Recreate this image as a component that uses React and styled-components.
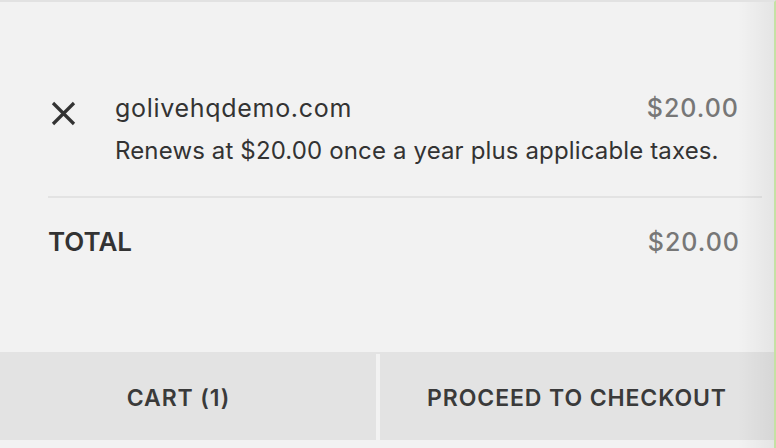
import styled, { createGlobalStyle } from 'styled-components';

const GlobalStyle = createGlobalStyle`
  html, body {
    margin: 0;
    padding: 0;
    background: #f2f2f2;
  }
  body {
    font-family: Inter, "Noto Sans", sans-serif;
    color: #333;
    -webkit-font-smoothing: antialiased;
  }
`

const Panel = styled.div`
  position: relative;
  box-sizing: border-box;
  width: 776px;
  height: 448px;
  display: flex;
  flex-direction: column;
  background: #f2f2f2;
  border-top: 2px solid #e2e2e2;
  border-right: 2px solid #c5e1a5;
  &::after {
    content: '';
    position: absolute;
    top: 0;
    right: 0;
    bottom: 0;
    width: 36px;
    background: linear-gradient(to right, rgba(0,0,0,0), rgba(0,0,0,0.055));
    pointer-events: none;
  }
`

const Summary = styled.section`
  padding: 0 12px 0 48px;
`

const ItemRow = styled.div`
  display: grid;
  grid-template-columns: 67px 1fr auto;
  grid-template-areas:
    'remove name price'
    '. desc desc';
  row-gap: 10px;
  padding: 91px 23px 30px 0;
  border-bottom: 2px solid #e3e3e3;
`

const RemoveButton = styled.button`
  all: unset;
  grid-area: remove;
  cursor: pointer;
  width: 25px;
  height: 25px;
  margin: 8px 0 0 3px;
  svg {
    display: block;
  }
`

const Name = styled.div`
  grid-area: name;
  font-size: 25px;
  line-height: 30px;
  letter-spacing: 0.7px;
  color: #333;
`

const Description = styled.div`
  grid-area: desc;
  font-size: 24px;
  line-height: 30px;
  letter-spacing: 0.14px;
  color: #333;
  white-space: nowrap;
`

const Price = styled.div`
  grid-area: price;
  font-size: 25px;
  line-height: 30px;
  font-weight: 500;
  letter-spacing: 1px;
  color: #777;
  text-align: right;
`

const TotalRow = styled.div`
  display: flex;
  justify-content: space-between;
  align-items: baseline;
  padding: 28px 22px 0 0;
`

const TotalLabel = styled.div`
  font-size: 26px;
  line-height: 31px;
  font-weight: 600;
  color: #333;
`

const Footer = styled.footer`
  margin-top: auto;
  margin-bottom: 8px;
  height: 88px;
  box-sizing: border-box;
  border-top: 2px solid #e3e3e3;
  display: flex;
  gap: 4px;
`

const FooterButton = styled.button`
  all: unset;
  cursor: pointer;
  box-sizing: border-box;
  flex: ${p => (p.$width ? `0 0 ${p.$width}px` : '1')};
  display: flex;
  align-items: center;
  justify-content: center;
  padding-right: ${p => p.$offset || 0}px;
  padding-top: 1px;
  font-family: Inter, "Noto Sans", sans-serif;
  font-size: 23px;
  font-weight: 600;
  letter-spacing: 0.9px;
  color: #3a3a3a;
  background: #e3e3e3;
`

function CloseIcon() {
  return (
    <svg width="25" height="25" viewBox="0 0 25 25">
      <path d="M2 2 L23 23 M23 2 L2 23" stroke="#333" strokeWidth="3.2" fill="none" />
    </svg>
  )
}

function App() {
  return (
    <>
      <GlobalStyle />
      <Panel>
        <Summary>
          <ItemRow>
            <RemoveButton aria-label="Remove item">
              <CloseIcon />
            </RemoveButton>
            <Name>golivehqdemo.com</Name>
            <Price>$20.00</Price>
            <Description>Renews at $20.00 once a year plus applicable taxes.</Description>
          </ItemRow>
          <TotalRow>
            <TotalLabel>TOTAL</TotalLabel>
            <Price>$20.00</Price>
          </TotalRow>
        </Summary>
        <Footer>
          <FooterButton $width={376} $offset={19}>CART (1)</FooterButton>
          <FooterButton>PROCEED TO CHECKOUT</FooterButton>
        </Footer>
      </Panel>
    </>
  )
}

export default App
